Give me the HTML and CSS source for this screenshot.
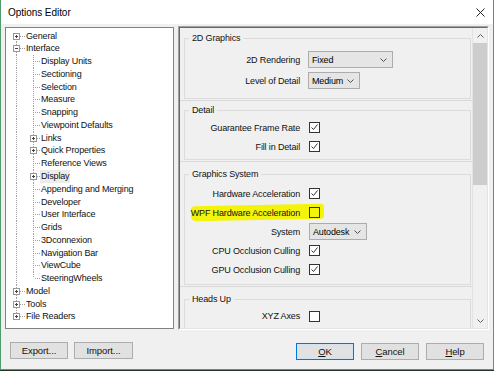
FILE: index.html
```html
<!DOCTYPE html>
<html>
<head>
<meta charset="utf-8">
<link rel="stylesheet" href="styles.css">
</head>
<body>
<div class="window">
  <div class="titlebar">
    <span class="title">Options Editor</span>
    <svg class="close" width="9" height="9" viewBox="0 0 9 9"><path d="M0.5 0.5 L8.5 8.5 M8.5 0.5 L0.5 8.5" stroke="#222" stroke-width="1" fill="none"/></svg>
  </div>
  <div class="content">
    <div class="main">
      <div class="tree">
        <div class="row"><span class="cell c-first"><span class="box plus"></span></span><span class="label">General</span></div>
        <div class="row"><span class="cell c-tee"><span class="box"></span></span><span class="label">Interface</span></div>
        <div class="row"><span class="cell c-vert"></span><span class="cell sub c-tee"></span><span class="label">Display Units</span></div>
        <div class="row"><span class="cell c-vert"></span><span class="cell sub c-tee"></span><span class="label">Sectioning</span></div>
        <div class="row"><span class="cell c-vert"></span><span class="cell sub c-tee"></span><span class="label">Selection</span></div>
        <div class="row"><span class="cell c-vert"></span><span class="cell sub c-tee"></span><span class="label">Measure</span></div>
        <div class="row"><span class="cell c-vert"></span><span class="cell sub c-tee"></span><span class="label">Snapping</span></div>
        <div class="row"><span class="cell c-vert"></span><span class="cell sub c-tee"></span><span class="label">Viewpoint Defaults</span></div>
        <div class="row"><span class="cell c-vert"></span><span class="cell sub c-tee"><span class="box plus"></span></span><span class="label">Links</span></div>
        <div class="row"><span class="cell c-vert"></span><span class="cell sub c-tee"><span class="box plus"></span></span><span class="label">Quick Properties</span></div>
        <div class="row"><span class="cell c-vert"></span><span class="cell sub c-tee"></span><span class="label">Reference Views</span></div>
        <div class="row"><span class="cell c-vert"></span><span class="cell sub c-tee"><span class="box plus"></span></span><span class="label hover">Display</span></div>
        <div class="row"><span class="cell c-vert"></span><span class="cell sub c-tee"></span><span class="label">Appending and Merging</span></div>
        <div class="row"><span class="cell c-vert"></span><span class="cell sub c-tee"></span><span class="label">Developer</span></div>
        <div class="row"><span class="cell c-vert"></span><span class="cell sub c-tee"></span><span class="label">User Interface</span></div>
        <div class="row"><span class="cell c-vert"></span><span class="cell sub c-tee"></span><span class="label">Grids</span></div>
        <div class="row"><span class="cell c-vert"></span><span class="cell sub c-tee"></span><span class="label">3Dconnexion</span></div>
        <div class="row"><span class="cell c-vert"></span><span class="cell sub c-tee"></span><span class="label">Navigation Bar</span></div>
        <div class="row"><span class="cell c-vert"></span><span class="cell sub c-tee"></span><span class="label">ViewCube</span></div>
        <div class="row"><span class="cell c-vert"></span><span class="cell sub c-last"></span><span class="label">SteeringWheels</span></div>
        <div class="row"><span class="cell c-tee"><span class="box plus"></span></span><span class="label">Model</span></div>
        <div class="row"><span class="cell c-tee"><span class="box plus"></span></span><span class="label">Tools</span></div>
        <div class="row"><span class="cell c-last"><span class="box plus"></span></span><span class="label">File Readers</span></div>
      </div>
      <div class="panel">
        <div class="panel-inner">
          <div class="pages">
            <div class="section s-first">
              <fieldset class="group g-graphics">
                <legend>2D Graphics</legend>
                <div class="opt"><span class="lbl">2D Rendering</span><span class="select w-render"><span>Fixed</span><svg width="7" height="4" viewBox="0 0 7 4"><path d="M0.5 0.5 L3.5 3.5 L6.5 0.5" stroke="#505050" fill="none"/></svg></span></div>
                <div class="opt"><span class="lbl">Level of Detail</span><span class="select w-level"><span>Medium</span><svg width="7" height="4" viewBox="0 0 7 4"><path d="M0.5 0.5 L3.5 3.5 L6.5 0.5" stroke="#505050" fill="none"/></svg></span></div>
              </fieldset>
            </div>
            <div class="section s-tight">
              <fieldset class="group g-detail">
                <legend>Detail</legend>
                <div class="opt"><span class="lbl">Guarantee Frame Rate</span><span class="check on"><svg width="9" height="9" viewBox="0 0 9 9"><path d="M1.5 4.5 L3.5 6.5 L7.5 1.5" stroke="#333" fill="none"/></svg></span></div>
                <div class="opt"><span class="lbl">Fill in Detail</span><span class="check on"><svg width="9" height="9" viewBox="0 0 9 9"><path d="M1.5 4.5 L3.5 6.5 L7.5 1.5" stroke="#333" fill="none"/></svg></span></div>
              </fieldset>
            </div>
            <div class="section s-sys">
              <fieldset class="group g-system">
                <legend>Graphics System</legend>
                <span class="marker"></span>
                <div class="opt"><span class="lbl">Hardware Acceleration</span><span class="check on"><svg width="9" height="9" viewBox="0 0 9 9"><path d="M1.5 4.5 L3.5 6.5 L7.5 1.5" stroke="#333" fill="none"/></svg></span></div>
                <div class="opt"><span class="lbl">WPF Hardware Acceleration</span><span class="check clear"></span></div>
                <div class="opt"><span class="lbl">System</span><span class="select w-system"><span>Autodesk</span><svg width="7" height="4" viewBox="0 0 7 4"><path d="M0.5 0.5 L3.5 3.5 L6.5 0.5" stroke="#505050" fill="none"/></svg></span></div>
                <div class="opt"><span class="lbl">CPU Occlusion Culling</span><span class="check on"><svg width="9" height="9" viewBox="0 0 9 9"><path d="M1.5 4.5 L3.5 6.5 L7.5 1.5" stroke="#333" fill="none"/></svg></span></div>
                <div class="opt"><span class="lbl">GPU Occlusion Culling</span><span class="check on"><svg width="9" height="9" viewBox="0 0 9 9"><path d="M1.5 4.5 L3.5 6.5 L7.5 1.5" stroke="#333" fill="none"/></svg></span></div>
              </fieldset>
            </div>
            <div class="section s-heads">
              <fieldset class="group g-heads">
                <legend>Heads Up</legend>
                <div class="opt"><span class="lbl">XYZ Axes</span><span class="check"></span></div>
                <div class="opt"><span class="lbl"></span><span class="check"></span></div>
              </fieldset>
            </div>
          </div>
          <div class="scrollbar">
            <div class="sb-btn"><svg width="7" height="4" viewBox="0 0 7 4"><path d="M0.5 3.5 L3.5 0.5 L6.5 3.5" stroke="#606060" fill="none"/></svg></div>
            <div class="sb-track"><div class="sb-thumb"></div></div>
            <div class="sb-btn"><svg width="7" height="4" viewBox="0 0 7 4"><path d="M0.5 0.5 L3.5 3.5 L6.5 0.5" stroke="#606060" fill="none"/></svg></div>
          </div>
        </div>
      </div>
    </div>
    <div class="footer">
      <div class="btn-group">
        <button class="btn w58">Export...</button>
        <button class="btn w59">Import...</button>
      </div>
      <div class="btn-group right">
        <button class="btn w58 default"><u>O</u>K</button>
        <button class="btn w58"><u>C</u>ancel</button>
        <button class="btn w58"><u>H</u>elp</button>
      </div>
    </div>
  </div>
</div>
</body>
</html>
```
FILE: styles.css
```css
html, body {
  margin: 0;
  padding: 0;
  background: #25352b;
}

.window {
  width: 492px;
  height: 369px;
  border: 1px solid #4f9d6b;
  border-top: 0;
  background: #f0f0f0;
  display: flex;
  flex-direction: column;
  font-family: "Liberation Sans", Arial, sans-serif;
  font-size: 9px;
  letter-spacing: -0.15px;
  color: #000;
  overflow: hidden;
}

.titlebar {
  height: 24px;
  flex: none;
  background: #fff;
  display: flex;
  align-items: center;
  justify-content: space-between;
  padding: 0 8px 0 7px;
}

.title {
  font-size: 10px;
  letter-spacing: -0.05px;
}

.close {
  display: block;
}

.content {
  flex: 1;
  display: flex;
  flex-direction: column;
  padding: 2px 4px 0 4px;
}

.main {
  display: flex;
  height: 304px;
  gap: 4px;
}

/* ---------- tree ---------- */
.tree {
  width: 169px;
  box-sizing: border-box;
  margin: 1px 0;
  background: #fff;
  border: 1px solid #828282;
  padding: 1.6px 0 0 2px;
  overflow: hidden;
}

.row {
  height: 12.77px;
  display: flex;
  align-items: stretch;
  white-space: nowrap;
}

.cell {
  width: 17px;
  flex: none;
  display: flex;
  align-items: center;
}

.cell.sub {
  width: 15px;
}

.c-vert {
  background: repeating-linear-gradient(to bottom, #a0a0a0 0 1px, transparent 1px 2px) 8px 0 / 1px 100% no-repeat;
}

.c-tee {
  background:
    repeating-linear-gradient(to bottom, #a0a0a0 0 1px, transparent 1px 2px) 8px 0 / 1px 100% no-repeat,
    repeating-linear-gradient(to right, #a0a0a0 0 1px, transparent 1px 2px) 10px 6px / 9px 1px no-repeat;
}

.c-first {
  background:
    repeating-linear-gradient(to bottom, #a0a0a0 0 1px, transparent 1px 2px) 8px 7px / 1px 7px no-repeat,
    repeating-linear-gradient(to right, #a0a0a0 0 1px, transparent 1px 2px) 10px 6px / 9px 1px no-repeat;
}

.c-last {
  background:
    repeating-linear-gradient(to bottom, #a0a0a0 0 1px, transparent 1px 2px) 8px 0 / 1px 6px no-repeat,
    repeating-linear-gradient(to right, #a0a0a0 0 1px, transparent 1px 2px) 10px 6px / 9px 1px no-repeat;
}

.box {
  width: 7px;
  height: 7px;
  box-sizing: border-box;
  margin-left: 5px;
  border: 1px solid #979797;
  background: #fff linear-gradient(#444, #444) center / 3px 1px no-repeat;
  align-self: flex-start;
  margin-top: 3px;
}

.box.plus {
  background:
    linear-gradient(#444, #444) center / 3px 1px no-repeat,
    linear-gradient(#444, #444) center / 1px 3px no-repeat,
    #fff;
}

.label {
  padding: 0 1px;
  line-height: 12.77px;
  color: #111;
}

.label.hover {
  background: #ececec;
}

/* ---------- panel ---------- */
.panel {
  flex: 1;
  border-style: solid;
  border-width: 1px;
  border-color: #a0a0a0 #fff #fff #a0a0a0;
}

.panel-inner {
  height: 100%;
  box-sizing: border-box;
  border-style: solid;
  border-width: 1px;
  border-color: #696969 #e3e3e3 #e3e3e3 #696969;
  display: flex;
  overflow: hidden;
}

.pages {
  flex: 1;
  overflow: hidden;
}

.section {
  padding: 4.5px 1px 1px 4px;
  border-bottom: 1px solid #d9d9d9;
  border-right: 1px solid #e2e2e2;
}

.section.s-first {
  padding-top: 4.5px;
}

.section.s-tight {
  padding-top: 3.5px;
}

.section.s-sys {
  padding-top: 6.5px;
}

.section.s-heads {
  padding-top: 6.5px;
}

.group {
  margin: 0;
  padding: 0;
  border: 1px solid #dcdcdc;
  min-width: 0;
  position: relative;
  display: flex;
  flex-direction: column;
  gap: 2px;
}

.group legend {
  margin-left: 4px;
  padding: 0 3px;
  line-height: 11px;
  color: #111;
}

.g-graphics { padding: 7.5px 0 9px; gap: 4px; }
.g-detail { padding: 3.5px 0 4px; }
.g-system { padding: 5.5px 0 6px; }
.g-heads { padding: 3px 0 6px; gap: 0; }

.opt {
  height: 17px;
  display: flex;
  align-items: center;
  gap: 8px;
  position: relative;
  z-index: 1;
}

.lbl {
  width: 115px;
  text-align: right;
  white-space: nowrap;
  color: #111;
}

.select {
  height: 17px;
  box-sizing: border-box;
  border: 1px solid #acacac;
  background: #e5e5e5;
  display: flex;
  align-items: center;
  justify-content: space-between;
  padding: 0 5px 0 3px;
}

.w-render { width: 85px; }
.w-level { width: 52px; }
.w-system { width: 58px; margin-left: 1px; }

.check {
  width: 11px;
  height: 11px;
  box-sizing: border-box;
  border: 1px solid #333;
  background: #fff;
  margin-left: 1px;
  display: flex;
  align-items: center;
  justify-content: center;
}

.check.clear {
  background: transparent;
}

.marker {
  position: absolute;
  left: 6px;
  top: 25px;
  width: 133px;
  height: 15px;
  background: #f3f30c;
  border-radius: 4px 3px 3px 5px;
  transform: rotate(-1.2deg);
  z-index: 0;
}

/* ---------- scrollbar ---------- */
.scrollbar {
  width: 14px;
  flex: none;
  background: #f0f0f0;
  display: flex;
  flex-direction: column;
}

.sb-btn {
  height: 15px;
  flex: none;
  display: flex;
  align-items: center;
  justify-content: center;
}

.sb-track {
  flex: 1;
}

.sb-thumb {
  height: 142px;
  background: #cdcdcd;
}

/* ---------- footer ---------- */
.footer {
  flex: 1;
  display: flex;
  align-items: flex-start;
  padding: 12px 5px 0 5px;
}

.btn-group {
  display: flex;
  gap: 6px;
}

.btn-group.right {
  margin-left: auto;
  gap: 7px;
  padding-top: 1px;
}

.btn {
  height: 17px;
  box-sizing: border-box;
  border: 1px solid #adadad;
  background: #e1e1e1;
  font-family: "Liberation Sans", Arial, sans-serif;
  font-size: 9.5px;
  letter-spacing: -0.1px;
  color: #111;
  padding: 0;
  margin: 0;
}

.btn u {
  text-decoration-thickness: 1px;
  text-underline-offset: 1px;
}

.btn.default {
  border: 1px solid #0078d7;
  box-shadow: inset 0 0 0 1px #cfe3f5;
}

.w58 { width: 58px; }
.w59 { width: 59px; }
```
